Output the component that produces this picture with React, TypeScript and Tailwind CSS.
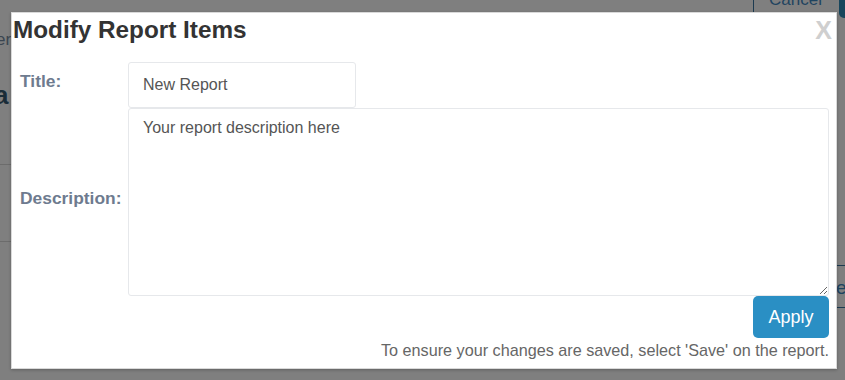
import React from "react";

function Backdrop() {
  // bits of the page behind the overlay that peek out around the modal
  return (
    <div className="pointer-events-none absolute inset-0 overflow-hidden">
      <span className="absolute left-[-4px] top-[27px] text-[17px] text-[#3a4550]">er</span>
      <span className="absolute left-[-6px] top-[76px] text-[26px] font-bold text-[#1a2c38]">a</span>
      <div className="absolute left-0 top-[164px] h-px w-[12px] bg-[#6c6c6c]" />
      <div className="absolute left-0 top-[241px] h-px w-[12px] bg-[#6c6c6c]" />
      <div className="absolute left-[753px] top-[-16px] h-[28px] w-[82px] border-l border-[#1c3a50]">
        <span className="absolute left-[15px] top-[3px] text-[17px] text-[#1f4460]">Cancel</span>
      </div>
      <div className="absolute left-[839px] top-[-8px] h-[26px] w-[20px] rounded-[5px] bg-[#18465c]" />
      <div className="absolute left-[836px] top-[265px] h-px w-[12px] bg-[#1c3a50]" />
      <div className="absolute left-[836px] top-[307px] h-px w-[12px] bg-[#1c3a50]" />
      <span className="absolute left-[836px] top-[274px] text-[19px] text-[#1f4460]">el</span>
    </div>
  );
}

export default function App() {
  return (
    <div className="relative h-[380px] w-[845px] overflow-hidden bg-[#7f7f7f] font-['Liberation_Sans',Arial,sans-serif]">
      <Backdrop />
      <div className="relative ml-[11px] mt-[12px] flex h-[357px] w-[826px] flex-col border border-[#d9d9d9] bg-white pl-px pr-[7px] shadow-[0_1px_3px_rgba(0,0,0,0.25)]">
        <div className="flex items-start justify-between">
          <h2 className="pt-[3px] text-[24.3px] font-bold leading-[28px] text-[#333]">
            Modify Report Items
          </h2>
          <button
            type="button"
            className="mr-[-3px] pt-[3px] text-[25px] font-bold leading-[28px] text-[#cfcfcf]"
          >
            X
          </button>
        </div>

        <div className="mt-[18px] flex pl-[7px]">
          <label className="w-[108px] pt-[10px] text-[17.4px] font-bold leading-[18px] text-[#6e7b8f]">
            Title:
          </label>
          <input
            type="text"
            defaultValue="New Report"
            className="h-[46px] w-[228px] rounded-[3px] border border-[#e6e8eb] px-[14px] text-[16px] text-[#555] outline-none"
          />
        </div>

        <div className="flex items-center pl-[7px]">
          <label className="w-[108px] pb-[8px] text-[17.4px] font-bold text-[#6e7b8f]">
            Description:
          </label>
          <textarea
            defaultValue="Your report description here"
            className="h-[188px] flex-1 rounded-[3px] border border-[#e6e8eb] px-[14px] pb-[8px] pt-[9px] text-[16px] leading-[20px] text-[#555] outline-none"
          />
        </div>

        <div className="flex justify-end">
          <button
            type="button"
            className="h-[42px] w-[76px] rounded-[5px] bg-[#2a8fc4] text-[18px] text-white"
          >
            Apply
          </button>
        </div>
        <p className="mt-[2px] text-right text-[16.2px] leading-[20px] text-[#666]">
          To ensure your changes are saved, select 'Save' on the report.
        </p>
      </div>
    </div>
  );
}
